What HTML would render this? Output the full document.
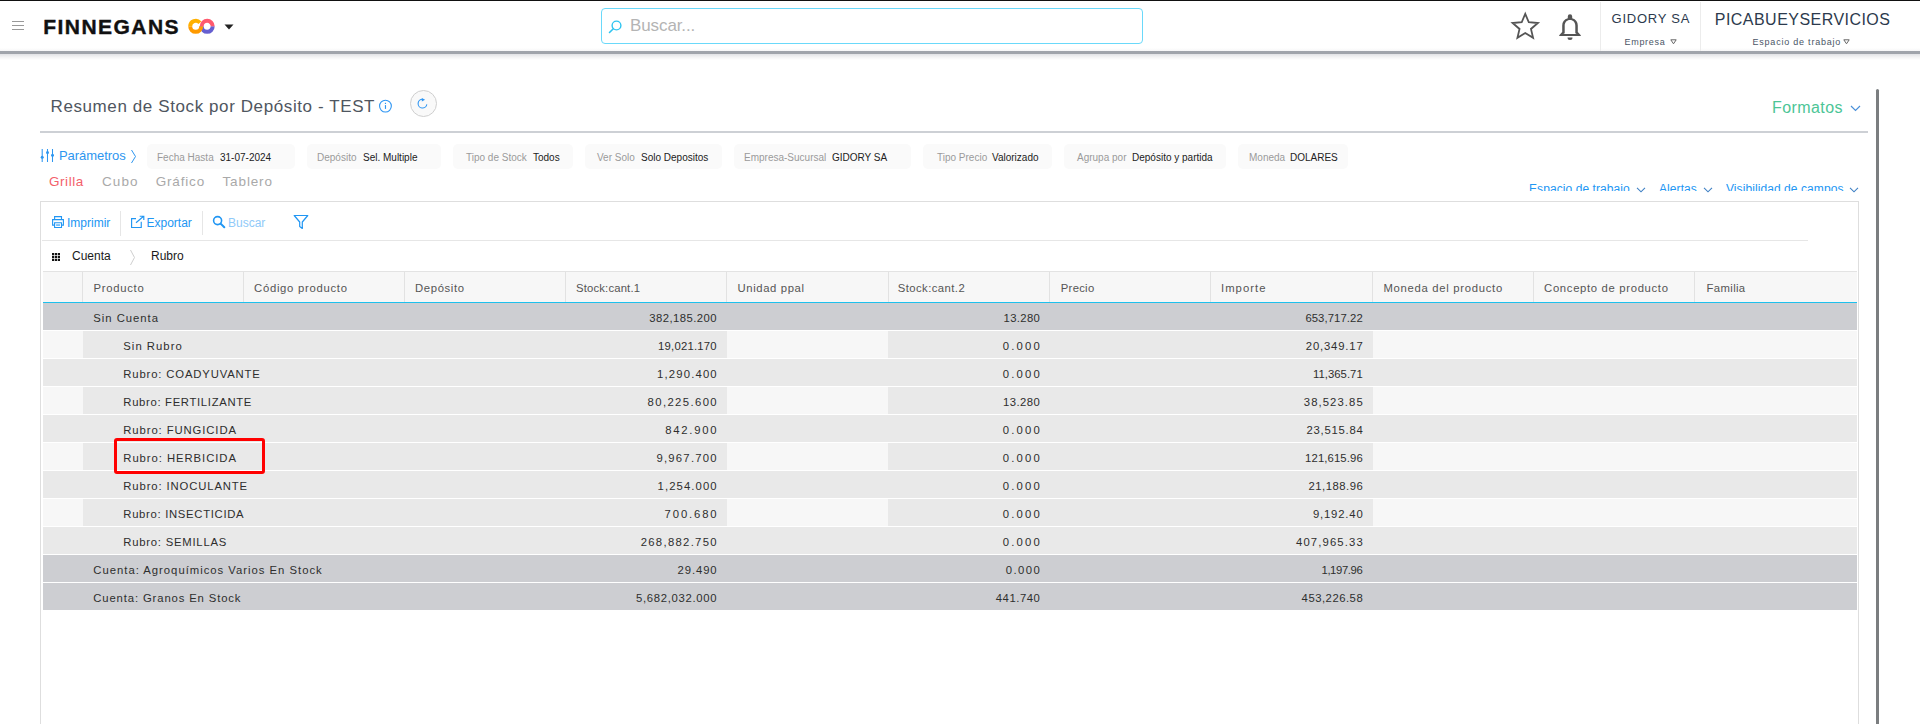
<!DOCTYPE html>
<html><head><meta charset="utf-8">
<style>
*{box-sizing:border-box;margin:0;padding:0}
html,body{width:1920px;height:724px;overflow:hidden;background:#fff;font-family:"Liberation Sans",sans-serif;position:relative}
.a{position:absolute;white-space:nowrap}
#topline{left:0;top:0;width:1920px;height:1px;background:#111}
#hdr{left:0;top:1px;width:1920px;height:50px;background:#fff}
#hdrb{left:0;top:51px;width:1920px;height:3px;background:#a0a4ab}
#hdrs{left:0;top:54px;width:1920px;height:6px;background:linear-gradient(#e1e2e5,#f3f3f4 50%,#fff)}
#hdrt{left:0;top:48px;width:1920px;height:3px;background:linear-gradient(#fff,#f6f6f7)}
.ham{left:12px;width:12px;height:1.2px;background:#999}
#logo{left:43.3px;top:15px;font-size:21px;font-weight:bold;letter-spacing:1.45px;color:#111;line-height:24px;-webkit-text-stroke:0.4px #111}
#search{left:601px;top:8px;width:542px;height:36px;border:1px solid #6ad9fa;border-radius:4px}
#buscar{left:630px;top:16.2px;font-size:17px;color:#b4b4b4;letter-spacing:-0.1px;line-height:20px}
.vsep{top:2px;width:1px;height:49px;background:#ececec}
.nav1{color:#2c3a4d}
#tline{left:40px;top:131px;width:1828px;height:2px;background:#cdd0d5}
#scroll{left:1876px;top:89px;width:3px;height:640px;background:#7b7e80;border-radius:2px}
#title{left:50.5px;top:96.5px;font-size:17px;color:#4f5660;letter-spacing:0.6px;line-height:20px}
.chip{top:144px;height:25px;background:#fafafa;border-radius:5px}
.cl{font-size:10px;color:#9a9a9a;top:152px;line-height:12px}
.cv{font-size:10px;color:#222;top:152px;line-height:12px}
.tab{top:173.6px;font-size:13.5px;color:#a9a9a9;line-height:16px}
.lnk{top:182px;font-size:12px;color:#2196f3;line-height:14px;height:9px;overflow:hidden;letter-spacing:0.08px}
#box{left:40px;top:201px;width:1819px;height:540px;border:1px solid #dedede;background:#fff}
.tb{top:215.8px;font-size:12px;color:#2196f3;line-height:14px}
#tbline{left:42px;top:240px;width:1766px;height:1px;background:#e6e6e6}
.grp{top:249px;font-size:12px;color:#1a1a1a;line-height:14px}
#thead{left:43px;top:271px;width:1814px;height:31px;background:#f7f7f7;border-top:1px solid #e3e3e3}
#thblue{left:43px;top:302px;width:1814px;height:2px;background:#1ec0ec}
.th{top:280.7px;font-size:11.3px;color:#555;line-height:14px}
.csep{top:272px;width:1px;height:30px;background:#e2e2e2}
.row{left:43px;width:1814px;height:27px}
.g1{background:#cdced2}
.g2{background:#e9e9e9}
.lt{background:#f7f7f7;height:27px;top:0}
.rt{font-size:11.3px;color:#2e2e2e;line-height:14px;top:8.4px}
.num{font-size:11.3px;color:#2e2e2e;line-height:14px;top:8.4px}
#redbox{left:114px;top:438px;width:151px;height:36px;border:3px solid #f00;border-radius:3px}
</style></head><body>
<div class="a" id="topline"></div>
<div class="a" id="hdr"></div>
<div class="a" id="hdrb"></div>
<div class="a" id="hdrs"></div>
<div class="a" id="hdrt"></div>
<div class="a ham" style="top:20.8px"></div>
<div class="a ham" style="top:24.6px"></div>
<div class="a ham" style="top:28.7px"></div>
<div class="a" id="logo">FINNEGANS</div>
<svg class="a" style="left:180px;top:10px" width="40" height="26" viewBox="0 0 40 26">
  <path d="M21.7 16.35 A5.5 5.5 0 0 0 32.7 16.35" fill="none" stroke="#665fd0" stroke-width="4"/>
  <path d="M10.2 16.35 A5.5 5.5 0 0 0 21.2 16.35" fill="none" stroke="#ff9a00" stroke-width="4"/>
  <path d="M10.2 16.35 A5.5 5.5 0 0 1 19.9 12.8" fill="none" stroke="#ffb000" stroke-width="4"/>
  <path d="M21.7 16.35 A5.5 5.5 0 0 1 32.7 16.35" fill="none" stroke="#ff5a6e" stroke-width="4"/>
</svg>
<svg class="a" style="left:224px;top:24px" width="10" height="6" viewBox="0 0 10 6"><path d="M0.5 0.5 L9.5 0.5 L5 5.5Z" fill="#222"/></svg>
<div class="a" id="search"></div>
<svg class="a" style="left:607px;top:18px" width="16" height="16" viewBox="0 0 16 16"><circle cx="9.5" cy="7.5" r="4.4" fill="none" stroke="#2fc4f0" stroke-width="1.4"/><path d="M6.3 10.7 L2.5 14.5" stroke="#2fc4f0" stroke-width="1.6" stroke-linecap="round"/></svg>
<div class="a" id="buscar">Buscar...</div>
<svg class="a" style="left:1510px;top:11px" width="31" height="30" viewBox="0 0 31 30"><path d="M15.25 2.80 L18.78 11.25 L27.90 11.99 L20.96 17.95 L23.07 26.86 L15.25 22.10 L7.43 26.86 L9.54 17.95 L2.60 11.99 L11.72 11.25Z" fill="none" stroke="#555" stroke-width="1.8" stroke-linejoin="miter"/></svg>
<svg class="a" style="left:1558px;top:13px" width="24" height="28" viewBox="0 0 24 28"><path d="M9.8 5.2 V3.4 A2.2 2.2 0 0 1 14.2 3.4 V5.2 C17.9 6.2 19.8 9 19.8 12.5 V19 L22.8 22.2 V23 H1.2 V22.2 L4.2 19 V12.5 C4.2 9 6.1 6.2 9.8 5.2Z M6.7 12.8 V20.3 L5.3 21 H18.7 L17.3 20.3 V12.8 C17.3 9.1 15.2 6.9 12 6.9 C8.8 6.9 6.7 9.1 6.7 12.8Z" fill="#555" fill-rule="evenodd"/><path d="M9.5 24.5 H14.5 A2.5 2.5 0 0 1 9.5 24.5Z" fill="#555"/></svg>
<div class="a vsep" style="left:1600px"></div>
<div class="a vsep" style="left:1700px"></div>
<div class="a nav1" style="left:1611.5px;top:11px;font-size:13px;letter-spacing:0.77px;line-height:15px">GIDORY SA</div>
<div class="a nav1" style="left:1624.5px;top:36.5px;font-size:9px;letter-spacing:0.7px;line-height:11px;color:#4a5566">Empresa</div>
<svg class="a" style="left:1670px;top:39px" width="7" height="6" viewBox="0 0 7 6"><path d="M0.8 0.8 H6.2 L3.5 4.8Z" fill="none" stroke="#666" stroke-width="1"/></svg>
<div class="a nav1" style="left:1714.8px;top:10.6px;font-size:16px;letter-spacing:0.46px;line-height:18px">PICABUEYSERVICIOS</div>
<div class="a nav1" style="left:1752.5px;top:36.5px;font-size:9px;letter-spacing:0.78px;line-height:11px;color:#4a5566">Espacio de trabajo</div>
<svg class="a" style="left:1843px;top:39px" width="7" height="6" viewBox="0 0 7 6"><path d="M0.8 0.8 H6.2 L3.5 4.8Z" fill="none" stroke="#666" stroke-width="1"/></svg>

<div class="a" id="title">Resumen de Stock por Depósito - TEST</div>
<svg class="a" style="left:378px;top:99px" width="15" height="15" viewBox="0 0 15 15"><circle cx="7.45" cy="7.1" r="5.9" fill="none" stroke="#2f96f3" stroke-width="1.1"/><rect x="6.9" y="6.1" width="1.15" height="3.8" fill="#2f96f3"/><rect x="6.9" y="3.8" width="1.15" height="1.2" fill="#2f96f3"/></svg>
<div class="a" style="left:410px;top:90px;width:27px;height:27px;border:1px solid #cfcfcf;border-radius:50%;background:#f9f9f9"></div>
<svg class="a" style="left:414px;top:95px" width="17" height="17" viewBox="0 0 17 17"><path d="M8.5 4.25 A4.4 4.4 0 1 0 12.83 9.41" fill="none" stroke="#2f96f3" stroke-width="1.1"/><path d="M7.8 2.9 L11.1 4.7 L7.8 6.5Z" fill="#2f96f3"/></svg>
<div class="a" style="left:1772px;top:98.6px;font-size:16px;color:#4cc596;letter-spacing:0.42px;line-height:18px">Formatos</div>
<svg class="a" style="left:1850px;top:105px" width="11" height="7" viewBox="0 0 11 7"><path d="M1 1 L5.5 5.5 L10 1" fill="none" stroke="#4a90d9" stroke-width="1.2"/></svg>
<div class="a" id="tline"></div>
<div class="a" id="scroll"></div>

<!-- params -->
<svg class="a" style="left:40px;top:148px" width="15" height="15" viewBox="0 0 15 15"><path d="M2.2 1 V14 M7.5 1 V14 M12.5 1 V14" stroke="#2d96f0" stroke-width="1.05"/><circle cx="2.2" cy="9.3" r="1.5" fill="#2d96f0"/><circle cx="7.5" cy="4.5" r="1.5" fill="#2d96f0"/><circle cx="12.5" cy="7.2" r="1.5" fill="#2d96f0"/></svg>
<div class="a" style="left:59px;top:148.4px;font-size:13px;color:#2d96f0;line-height:15px;letter-spacing:-0.05px">Parámetros</div>
<svg class="a" style="left:130px;top:149px" width="8" height="15" viewBox="0 0 8 15"><path d="M1.5 1 L5.5 7.5 L1.5 14" fill="none" stroke="#2d96f0" stroke-width="1"/></svg>

<div class="a chip" style="left:147px;width:148px"></div>
<div class="a cl" style="left:157px">Fecha Hasta</div><div class="a cv" style="left:220px">31-07-2024</div>
<div class="a chip" style="left:307px;width:134px"></div>
<div class="a cl" style="left:317px">Depósito</div><div class="a cv" style="left:363px">Sel. Multiple</div>
<div class="a chip" style="left:453px;width:120px"></div>
<div class="a cl" style="left:466px">Tipo de Stock</div><div class="a cv" style="left:533px">Todos</div>
<div class="a chip" style="left:585px;width:137px"></div>
<div class="a cl" style="left:597px">Ver Solo</div><div class="a cv" style="left:641px">Solo Depositos</div>
<div class="a chip" style="left:734px;width:177px"></div>
<div class="a cl" style="left:744px">Empresa-Sucursal</div><div class="a cv" style="left:832px">GIDORY SA</div>
<div class="a chip" style="left:923px;width:129px"></div>
<div class="a cl" style="left:937px">Tipo Precio</div><div class="a cv" style="left:992px">Valorizado</div>
<div class="a chip" style="left:1064px;width:162px"></div>
<div class="a cl" style="left:1077px">Agrupa por</div><div class="a cv" style="left:1132px">Depósito y partida</div>
<div class="a chip" style="left:1238px;width:110px"></div>
<div class="a cl" style="left:1249px">Moneda</div><div class="a cv" style="left:1290px">DOLARES</div>

<div class="a tab" style="left:49px;color:#f35f6b;letter-spacing:0.55px">Grilla</div>
<div class="a tab" style="left:102px;letter-spacing:1.07px">Cubo</div>
<div class="a tab" style="left:155.7px;letter-spacing:0.83px">Gráfico</div>
<div class="a tab" style="left:222.5px;letter-spacing:0.87px">Tablero</div>

<div class="a lnk" style="left:1529px">Espacio de trabajo</div>
<svg class="a" style="left:1635.5px;top:186.5px" width="10" height="6" viewBox="0 0 10 6"><path d="M1 0.8 L5 4.8 L9 0.8" fill="none" stroke="#3f80c4" stroke-width="1.1"/></svg>
<div class="a lnk" style="left:1659px">Alertas</div>
<svg class="a" style="left:1702.5px;top:186.5px" width="10" height="6" viewBox="0 0 10 6"><path d="M1 0.8 L5 4.8 L9 0.8" fill="none" stroke="#3f80c4" stroke-width="1.1"/></svg>
<div class="a lnk" style="left:1726px">Visibilidad de campos</div>
<svg class="a" style="left:1848.5px;top:186.5px" width="10" height="6" viewBox="0 0 10 6"><path d="M1 0.8 L5 4.8 L9 0.8" fill="none" stroke="#3f80c4" stroke-width="1.1"/></svg>

<div class="a" id="box"></div>
<!-- toolbar -->
<svg class="a" style="left:48px;top:210px" width="20" height="24" viewBox="0 0 20 24"><path d="M6.6 9.6 V6.6 H13.5 V9.6 M6.6 15.1 H4.6 V9.6 H15.4 V15.1 H13.5 M6.6 12.7 H13.5 V17.5 H6.6Z" fill="none" stroke="#2196f3" stroke-width="1.1"/><rect x="8.1" y="14.5" width="3.9" height="1.1" fill="#2196f3"/></svg>
<div class="a tb" style="left:67px">Imprimir</div>
<div class="a" style="left:120px;top:211px;width:1px;height:25px;background:#e6e6e6"></div>
<svg class="a" style="left:128px;top:212px" width="18" height="18" viewBox="0 0 18 18"><path d="M8 6.6 H3.6 V15.5 H13.25 V9.7" fill="none" stroke="#2196f3" stroke-width="1.15"/><path d="M8 10.8 L15.3 4.5 M11.7 4.2 H15.8 V7.9" fill="none" stroke="#2196f3" stroke-width="1.15"/></svg>
<div class="a tb" style="left:146.5px">Exportar</div>
<div class="a" style="left:202px;top:211px;width:1px;height:24px;background:#e6e6e6"></div>
<svg class="a" style="left:212px;top:215px" width="14" height="14" viewBox="0 0 14 14"><circle cx="5.6" cy="5.6" r="4" fill="none" stroke="#2196f3" stroke-width="1.6"/><path d="M8.6 8.6 L12.3 12.3" stroke="#2196f3" stroke-width="2" stroke-linecap="round"/></svg>
<div class="a tb" style="left:228px;color:#90caf9">Buscar</div>
<svg class="a" style="left:293px;top:214px" width="16" height="16" viewBox="0 0 16 16"><path d="M1.2 1.5 H14.8 L9.3 8 V14.5 L6.7 12.5 V8Z" fill="none" stroke="#2196f3" stroke-width="1.2" stroke-linejoin="round"/></svg>
<div class="a" id="tbline"></div>
<svg class="a" style="left:52px;top:252.8px" width="8.3" height="8.3" viewBox="0 0 8.3 8.3" fill="#111"><rect x="0" y="0" width="2.3" height="2.3"/><rect x="3" y="0" width="2.3" height="2.3"/><rect x="6" y="0" width="2.3" height="2.3"/><rect x="0" y="3" width="2.3" height="2.3"/><rect x="3" y="3" width="2.3" height="2.3"/><rect x="6" y="3" width="2.3" height="2.3"/><rect x="0" y="6" width="2.3" height="2.3"/><rect x="3" y="6" width="2.3" height="2.3"/><rect x="6" y="6" width="2.3" height="2.3"/></svg>
<div class="a grp" style="left:72px">Cuenta</div>
<svg class="a" style="left:129px;top:249px" width="8" height="17" viewBox="0 0 8 17"><path d="M1.5 1 L5.5 8.5 L1.5 16" fill="none" stroke="#cfcfcf" stroke-width="1"/></svg>
<div class="a grp" style="left:151px">Rubro</div>

<!-- table header -->
<div class="a" id="thead"></div>
<div class="a csep" style="left:82px"></div>
<div class="a csep" style="left:243px"></div>
<div class="a csep" style="left:404px"></div>
<div class="a csep" style="left:565px"></div>
<div class="a csep" style="left:726px"></div>
<div class="a csep" style="left:888px"></div>
<div class="a csep" style="left:1049px"></div>
<div class="a csep" style="left:1210px"></div>
<div class="a csep" style="left:1372px"></div>
<div class="a csep" style="left:1533px"></div>
<div class="a csep" style="left:1694px"></div>
<div class="a th" style="left:93.50px;letter-spacing:0.721px">Producto</div>
<div class="a th" style="left:254.00px;letter-spacing:0.721px">Código producto</div>
<div class="a th" style="left:415.00px;letter-spacing:0.643px">Depósito</div>
<div class="a th" style="left:576.00px;letter-spacing:0.164px">Stock:cant.1</div>
<div class="a th" style="left:737.50px;letter-spacing:0.620px">Unidad ppal</div>
<div class="a th" style="left:897.80px;letter-spacing:0.427px">Stock:cant.2</div>
<div class="a th" style="left:1060.80px;letter-spacing:0.270px">Precio</div>
<div class="a th" style="left:1221.00px;letter-spacing:1.033px">Importe</div>
<div class="a th" style="left:1383.40px;letter-spacing:0.703px">Moneda del producto</div>
<div class="a th" style="left:1544.10px;letter-spacing:0.668px">Concepto de producto</div>
<div class="a th" style="left:1706.60px;letter-spacing:0.358px">Familia</div>
<div class="a" id="thblue"></div>
<!--ROWS--><div class="a row g1" style="top:303px"><div class="a rt" style="left:50.30px;letter-spacing:0.978px">Sin Cuenta</div><div class="a num" style="left:606.20px;letter-spacing:0.455px">382,185.200</div><div class="a num" style="left:960.50px;letter-spacing:0.370px">13.280</div><div class="a num" style="left:1262.40px;letter-spacing:0.083px">653,717.22</div></div>
<div class="a row g2" style="top:331px"><div class="a lt" style="left:0;width:40px"></div><div class="a lt" style="left:684px;width:161px"></div><div class="a lt" style="left:1330px;width:484px"></div><div class="a rt" style="left:80.30px;letter-spacing:1.025px">Sin Rubro</div><div class="a num" style="left:615.00px;letter-spacing:0.228px">19,021.170</div><div class="a num" style="left:959.70px;letter-spacing:2.225px">0.000</div><div class="a num" style="left:1262.80px;letter-spacing:0.831px">20,349.17</div></div>
<div class="a row g2" style="top:359px"><div class="a rt" style="left:80.30px;letter-spacing:0.844px">Rubro: COADYUVANTE</div><div class="a num" style="left:614.10px;letter-spacing:1.156px">1,290.400</div><div class="a num" style="left:959.70px;letter-spacing:2.225px">0.000</div><div class="a num" style="left:1270.10px;letter-spacing:0.019px">11,365.71</div></div>
<div class="a row g2" style="top:387px"><div class="a lt" style="left:0;width:40px"></div><div class="a lt" style="left:684px;width:161px"></div><div class="a lt" style="left:1330px;width:484px"></div><div class="a rt" style="left:80.30px;letter-spacing:0.675px">Rubro: FERTILIZANTE</div><div class="a num" style="left:604.60px;letter-spacing:1.383px">80,225.600</div><div class="a num" style="left:960.00px;letter-spacing:0.470px">13.280</div><div class="a num" style="left:1260.80px;letter-spacing:1.081px">38,523.85</div></div>
<div class="a row g2" style="top:415px"><div class="a rt" style="left:80.30px;letter-spacing:0.900px">Rubro: FUNGICIDA</div><div class="a num" style="left:622.30px;letter-spacing:1.742px">842.900</div><div class="a num" style="left:959.70px;letter-spacing:2.225px">0.000</div><div class="a num" style="left:1263.50px;letter-spacing:0.744px">23,515.84</div></div>
<div class="a row g2" style="top:443px"><div class="a lt" style="left:0;width:40px"></div><div class="a lt" style="left:684px;width:161px"></div><div class="a lt" style="left:1330px;width:484px"></div><div class="a rt" style="left:80.30px;letter-spacing:0.940px">Rubro: HERBICIDA</div><div class="a num" style="left:613.40px;letter-spacing:1.244px">9,967.700</div><div class="a num" style="left:959.70px;letter-spacing:2.225px">0.000</div><div class="a num" style="left:1262.10px;letter-spacing:0.117px">121,615.96</div></div>
<div class="a row g2" style="top:471px"><div class="a rt" style="left:80.30px;letter-spacing:0.875px">Rubro: INOCULANTE</div><div class="a num" style="left:614.60px;letter-spacing:1.094px">1,254.000</div><div class="a num" style="left:959.70px;letter-spacing:2.225px">0.000</div><div class="a num" style="left:1265.60px;letter-spacing:0.481px">21,188.96</div></div>
<div class="a row g2" style="top:499px"><div class="a lt" style="left:0;width:40px"></div><div class="a lt" style="left:684px;width:161px"></div><div class="a lt" style="left:1330px;width:484px"></div><div class="a rt" style="left:80.30px;letter-spacing:0.691px">Rubro: INSECTICIDA</div><div class="a num" style="left:621.60px;letter-spacing:1.858px">700.680</div><div class="a num" style="left:959.70px;letter-spacing:2.225px">0.000</div><div class="a num" style="left:1269.90px;letter-spacing:0.829px">9,192.40</div></div>
<div class="a row g2" style="top:527px"><div class="a rt" style="left:80.30px;letter-spacing:0.761px">Rubro: SEMILLAS</div><div class="a num" style="left:597.70px;letter-spacing:1.305px">268,882.750</div><div class="a num" style="left:959.70px;letter-spacing:2.225px">0.000</div><div class="a num" style="left:1253.00px;letter-spacing:1.128px">407,965.33</div></div>
<div class="a row g1" style="top:555px"><div class="a rt" style="left:50.30px;letter-spacing:0.989px">Cuenta: Agroquímicos Varios En Stock</div><div class="a num" style="left:634.50px;letter-spacing:0.910px">29.490</div><div class="a num" style="left:962.70px;letter-spacing:1.475px">0.000</div><div class="a num" style="left:1278.50px;letter-spacing:-0.400px">1,197.96</div></div>
<div class="a row g1" style="top:583px"><div class="a rt" style="left:50.30px;letter-spacing:0.868px">Cuenta: Granos En Stock</div><div class="a num" style="left:593.00px;letter-spacing:0.696px">5,682,032.000</div><div class="a num" style="left:952.80px;letter-spacing:0.542px">441.740</div><div class="a num" style="left:1258.60px;letter-spacing:0.506px">453,226.58</div></div><!--/ROWS-->
<div class="a" id="redbox"></div>
</body></html>
